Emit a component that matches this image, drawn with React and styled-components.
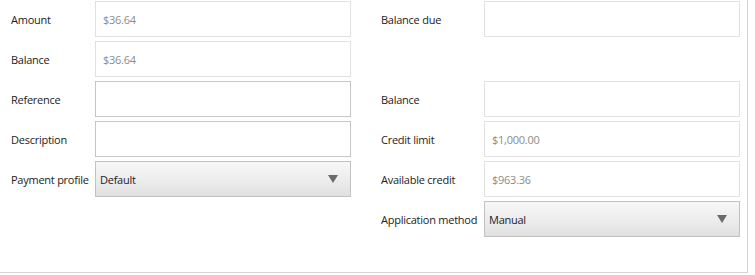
import styled, { createGlobalStyle } from "styled-components";

const Global = createGlobalStyle`
  body {
    margin: 0;
    background: #ffffff;
    font-family: "Open Sans", "Noto Sans", sans-serif;
  }
`;

const leftRows = [
  { label: "Amount", value: "$36.64", kind: "readonly" },
  { label: "Balance", value: "$36.64", kind: "readonly" },
  { label: "Reference", value: "", kind: "edit" },
  { label: "Description", value: "", kind: "edit" },
  { label: "Payment profile", value: "Default", kind: "select" },
];

const rightRows = [
  { label: "Balance due", value: "", kind: "readonly" },
  null,
  { label: "Balance", value: "", kind: "readonly" },
  { label: "Credit limit", value: "$1,000.00", kind: "readonly" },
  { label: "Available credit", value: "$963.36", kind: "readonly" },
  { label: "Application method", value: "Manual", kind: "select" },
];

const App = () => {
  const renderRow = (row, i, labelWidth) => {
    if (!row) return <Spacer key={i} />;
    return (
      <Row key={i} $labelWidth={labelWidth}>
        <Label>{row.label}</Label>
        {row.kind === "select" ? (
          <Select>
            <span>{row.value}</span>
            <Arrow />
          </Select>
        ) : (
          <Field $edit={row.kind === "edit"}>{row.value}</Field>
        )}
      </Row>
    );
  };

  return (
    <>
      <Global />
      <Panel>
        <Column $width={351}>
          {leftRows.map((r, i) => renderRow(r, i, 84))}
        </Column>
        <Column $width={370}>
          {rightRows.map((r, i) => renderRow(r, i, 103))}
        </Column>
      </Panel>
    </>
  );
};

const Panel = styled.div`
  width: 747px;
  height: 272px;
  box-sizing: content-box;
  border-right: 1px solid #d4d4d4;
  border-bottom: 1px solid #d4d4d4;
  display: flex;
  gap: 19px;
`;

const Column = styled.div`
  width: ${(p) => p.$width}px;
  padding: 1px 0 0 11px;
  box-sizing: border-box;
  display: flex;
  flex-direction: column;
  gap: 4px;
`;

const Row = styled.div`
  display: grid;
  grid-template-columns: ${(p) => p.$labelWidth}px 256px;
  align-items: center;
  height: 36px;
`;

const Spacer = styled.div`
  height: 36px;
`;

const Label = styled.div`
  font-size: 11px;
  letter-spacing: -0.25px;
  color: #222222;
  white-space: nowrap;
`;

const Field = styled.div`
  height: 36px;
  box-sizing: border-box;
  border: 1px solid ${(p) => (p.$edit ? "#c6c6c6" : "#e0e0e0")};
  background: #ffffff;
  padding: 0 7px;
  display: flex;
  align-items: center;
  font-size: 11px;
  letter-spacing: -0.25px;
  color: #8c8c8c;
`;

const Select = styled.div`
  height: 36px;
  box-sizing: border-box;
  border: 1px solid #c2c2c2;
  background: linear-gradient(to bottom, #f7f7f7 0%, #ececec 55%, #e0e0e0 100%);
  padding: 0 12px 0 4px;
  display: flex;
  align-items: center;
  justify-content: space-between;
  font-size: 11px;
  letter-spacing: -0.25px;
  color: #222222;
`;

const Arrow = styled.span`
  width: 0;
  height: 0;
  border-left: 5px solid transparent;
  border-right: 5px solid transparent;
  border-top: 8px solid #6b6b6b;
`;

export default App;
